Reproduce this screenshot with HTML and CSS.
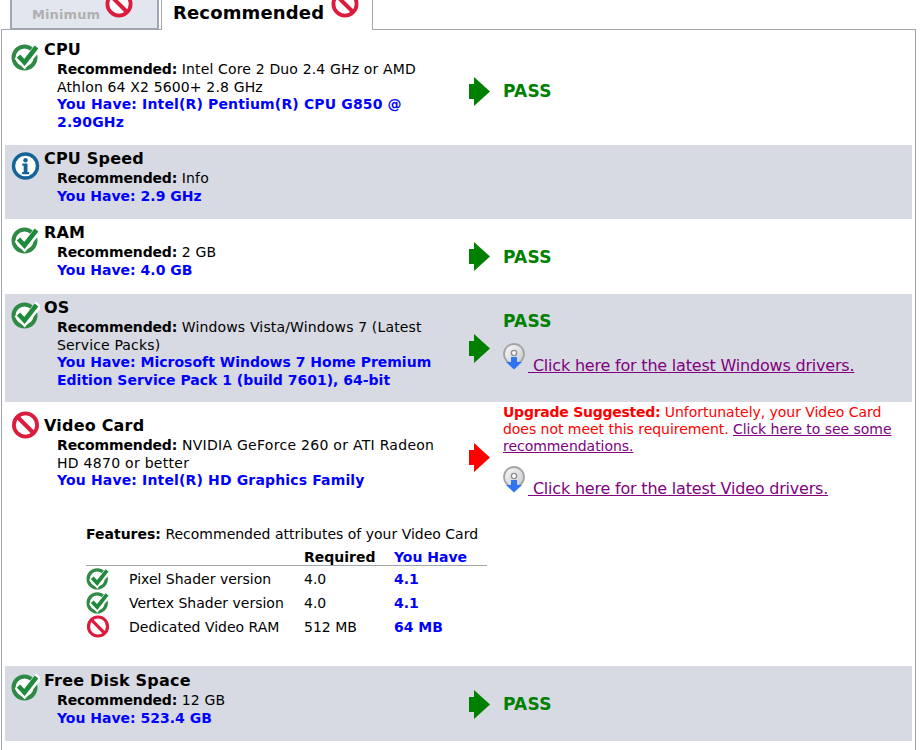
FILE: index.html
```html
<!DOCTYPE html>
<html lang="en">
<head>
<meta charset="utf-8">
<title>System Requirements</title>
<link rel="stylesheet" href="styles.css">
</head>
<body>
<svg class="defs" width="0" height="0" aria-hidden="true">
  <defs>
    <linearGradient id="discfill" x1="0" y1="0" x2="1" y2="1">
      <stop offset="0" stop-color="#fafafa"/>
      <stop offset="1" stop-color="#c9c9cc"/>
    </linearGradient>
  </defs>
  <symbol id="ok" viewBox="0 0 29 28">
    <circle cx="13.5" cy="14.500" r="11" fill="#fff" stroke="#2f8a45" stroke-width="4"/>
    <path d="M6.500 13l7 7.500L28 3" fill="none" stroke="#fff" stroke-width="8"/>
    <path d="M7.500 13l6 6.500L25.500 4" fill="none" stroke="#1d8a3c" stroke-width="4.600"/>
  </symbol>
  <symbol id="no" viewBox="0 0 28 28">
    <circle cx="14" cy="14" r="11.600" fill="#fff" stroke="#dc1c3c" stroke-width="3.800"/>
    <path d="M6 6l16 16" stroke="#dc1c3c" stroke-width="4"/>
  </symbol>
  <symbol id="info" viewBox="0 0 28 28">
    <circle cx="14" cy="14" r="12" fill="#fff" stroke="#14649a" stroke-width="3.400"/>
    <circle cx="14" cy="8.200" r="2.200" fill="#14649a"/>
    <path d="M10.800 11.600h5.200v8.400h1.600v2.200h-7v-2.200h1.600v-6.200h-1.400z" fill="#14649a"/>
  </symbol>
  <symbol id="arrow" viewBox="0 0 21 29">
    <path d="M0 7h5V0l16 14.500L5 29v-7H0z" fill="currentColor"/>
  </symbol>
  <symbol id="disc" viewBox="0 0 22 28">
    <circle cx="11" cy="11" r="10" fill="url(#discfill)" stroke="#a4a4a8" stroke-width="1.800"/>
    <circle cx="11" cy="10" r="2.600" fill="#fff" stroke="#8e8e92" stroke-width="1.400"/>
    <path d="M8 14h6v5h5l-8 7.500L3 19h5z" fill="#2f74f0"/>
  </symbol>
</svg>

<nav class="tabs">
  <div class="tab tab-off"><span>Minimum</span><svg class="tab-icon"><use href="#no"/></svg></div>
  <div class="tab tab-on"><span>Recommended</span><svg class="tab-icon"><use href="#no"/></svg></div>
</nav>

<main class="panel">
  <section class="row row-cpu">
    <div class="req">
      <svg class="status"><use href="#ok"/></svg>
      <h2>CPU</h2>
      <p><b>Recommended:</b> Intel Core 2 Duo 2.4 GHz or AMD Athlon 64 X2 5600+ 2.8 GHz</p>
      <p class="have">You Have: Intel(R) Pentium(R) CPU G850 @ 2.90GHz</p>
    </div>
    <svg class="arrow pass-arrow"><use href="#arrow"/></svg>
    <div class="result"><strong class="pass">PASS</strong></div>
  </section>

  <section class="row row-speed shaded">
    <div class="req">
      <svg class="status"><use href="#info"/></svg>
      <h2>CPU Speed</h2>
      <p><b>Recommended:</b> Info</p>
      <p class="have">You Have: 2.9 GHz</p>
    </div>
  </section>

  <section class="row row-ram">
    <div class="req">
      <svg class="status"><use href="#ok"/></svg>
      <h2>RAM</h2>
      <p><b>Recommended:</b> 2 GB</p>
      <p class="have">You Have: 4.0 GB</p>
    </div>
    <svg class="arrow pass-arrow"><use href="#arrow"/></svg>
    <div class="result"><strong class="pass">PASS</strong></div>
  </section>

  <section class="row row-os shaded">
    <div class="req">
      <svg class="status"><use href="#ok"/></svg>
      <h2>OS</h2>
      <p><b>Recommended:</b> Windows Vista/Windows 7 (Latest Service Packs)</p>
      <p class="have">You Have: Microsoft Windows 7 Home Premium Edition Service Pack 1 (build 7601), 64-bit</p>
    </div>
    <svg class="arrow pass-arrow"><use href="#arrow"/></svg>
    <div class="result">
      <strong class="pass pass-block">PASS</strong>
      <a class="driver" href="#"><svg class="disc"><use href="#disc"/></svg> Click here for the latest Windows drivers.</a>
    </div>
  </section>

  <section class="row row-video">
    <div class="req">
      <svg class="status status-video"><use href="#no"/></svg>
      <h2>Video Card</h2>
      <p><b>Recommended:</b> NVIDIA GeForce 260 or ATI Radeon HD 4870 or better</p>
      <p class="have">You Have: Intel(R) HD Graphics Family</p>
      <div class="features">
        <p class="features-title"><b>Features:</b> Recommended attributes of your Video Card</p>
        <table>
          <thead>
            <tr><th></th><th></th><th>Required</th><th class="blue">You Have</th></tr>
          </thead>
          <tbody>
            <tr><td><svg class="mini"><use href="#ok"/></svg></td><td>Pixel Shader version</td><td>4.0</td><td class="blue">4.1</td></tr>
            <tr><td><svg class="mini"><use href="#ok"/></svg></td><td>Vertex Shader version</td><td>4.0</td><td class="blue">4.1</td></tr>
            <tr><td><svg class="mini"><use href="#no"/></svg></td><td>Dedicated Video RAM</td><td>512 MB</td><td class="blue">64 MB</td></tr>
          </tbody>
        </table>
      </div>
    </div>
    <svg class="arrow fail-arrow"><use href="#arrow"/></svg>
    <div class="result result-video">
      <p class="warn"><b>Upgrade Suggested:</b> Unfortunately, your Video Card does not meet this requirement. <a href="#">Click here to see some recommendations.</a></p>
      <a class="driver" href="#"><svg class="disc"><use href="#disc"/></svg> Click here for the latest Video drivers.</a>
    </div>
  </section>

  <section class="row row-disk shaded">
    <div class="req">
      <svg class="status"><use href="#ok"/></svg>
      <h2>Free Disk Space</h2>
      <p><b>Recommended:</b> 12 GB</p>
      <p class="have">You Have: 523.4 GB</p>
    </div>
    <svg class="arrow pass-arrow"><use href="#arrow"/></svg>
    <div class="result"><strong class="pass">PASS</strong></div>
  </section>
</main>
</body>
</html>
```
FILE: styles.css
```css
* { box-sizing: border-box; }
html, body { margin: 0; height: 750px; overflow: hidden; background: #fff; }
body {
  font-family: "DejaVu Sans", Verdana, sans-serif;
  font-size: 14px;
  line-height: 17.5px;
  color: #000;
}
.defs { position: absolute; }
p, h2 { margin: 0; }

.tabs { display: flex; height: 29px; padding-left: 10px; gap: 2px; }
.tab {
  display: flex;
  border: 1px solid #a0a7b0;
  border-top: 0;
  border-bottom: 0;
  overflow: hidden;
}
.tab-off {
  width: 149px;
  background: #e2e7ef;
  border-width: 0 2px 1px;
  border-bottom: 1px solid #a0a5ad;
  color: #b0b0b0;
  font-weight: bold;
  font-size: 13px;
  padding: 6px 0 0 20px;
  gap: 5px;
}
.tab-off span { letter-spacing: .1px; }
.tab-on {
  width: 212px;
  position: relative;
  z-index: 1;
  height: 30px;
  background: #fff;
  font-weight: bold;
  font-size: 18px;
  padding: 4px 0 0 11px;
  gap: 7px;
}
.tab-on span { letter-spacing: .15px; }
.tab-icon { width: 28px; height: 28px; flex: none; }
.tab-off .tab-icon { margin-top: -16px; }
.tab-on .tab-icon { margin-top: -14px; }

.panel {
  width: 915px;
  margin-left: 1px;
  height: 760px;
  border: 1px solid #a0a5ad;
  padding: 0 3px;
}
.row {
  display: grid;
  grid-template-columns: 459px 39px 1fr;
  align-items: center;
  width: 907px;
}
.shaded { background: #d7dae2; }
.row-cpu { height: 115px; }
.row-speed { height: 74px; }
.row-ram { height: 75px; }
.row-os { height: 108px; }
.row-video { height: 264px; }
.row-disk { height: 75px; }

.req { position: relative; align-self: start; padding: 4px 12px 0 52px; letter-spacing: .15px; }
.row-video .req { letter-spacing: .28px; }
.req b { letter-spacing: -.15px; }
h2 { font-size: 16px; line-height: 20px; margin-left: -13px; margin-bottom: 1px; letter-spacing: .2px; }
.status { position: absolute; left: 6px; top: 7px; width: 29px; height: 28px; }
.row-cpu .status { top: 13px; }
.status-video { top: 9px; }
.have { color: #00f; font-weight: bold; letter-spacing: 0; }
.row-cpu .have, .row-video .have { letter-spacing: .15px; }
.row-cpu .req { padding-top: 10px; }
.row-video .req { padding-top: 14px; }
.row-disk .req { padding-top: 5px; }

.arrow { width: 21px; height: 29px; margin-left: 5px; }
.row-cpu .arrow { margin-top: 8px; }
.row-disk .arrow { margin-top: 2px; }
.pass-arrow { color: #008000; }
.fail-arrow { color: #f00; margin-top: -154px; }
.pass { color: #008000; font-size: 17px; font-weight: bold; letter-spacing: .2px; }
.row-cpu .pass { position: relative; top: 5px; }
.row-ram .pass, .row-disk .pass { position: relative; top: 2px; }
.pass-block { display: block; margin-bottom: 13px; margin-top: -7px; }
.result { padding-right: 18px; }
.result-video { align-self: start; padding-top: 2px; }
.warn { color: #f00; line-height: 17px; margin-bottom: 11px; letter-spacing: -.04px; }
.warn b { letter-spacing: -.25px; }
a { color: #800080; }
.driver { font-size: 16px; line-height: 20px; display: block; letter-spacing: -.2px; }
.disc { width: 22px; height: 28px; margin-right: 3px; }

.features { margin: 36px 0 0 29px; width: 401px; font-size: 14px; letter-spacing: 0; }
.features b { letter-spacing: 0; }
.features-title { margin-bottom: 6px; }
table { width: 100%; border-collapse: collapse; table-layout: fixed; }
th { text-align: left; height: 16px; padding: 0; border-bottom: 1px solid #a0a5ad; line-height: 16px; }
td { height: 24px; padding: 2px 0 0; line-height: 22px; }
th:nth-child(1), td:nth-child(1) { width: 43px; }
th:nth-child(2), td:nth-child(2) { width: 175px; }
th:nth-child(3), td:nth-child(3) { width: 90px; }
.blue { color: #00f; font-weight: bold; }
.mini { display: block; width: 24px; height: 23px; margin-top: -2px; }
```
